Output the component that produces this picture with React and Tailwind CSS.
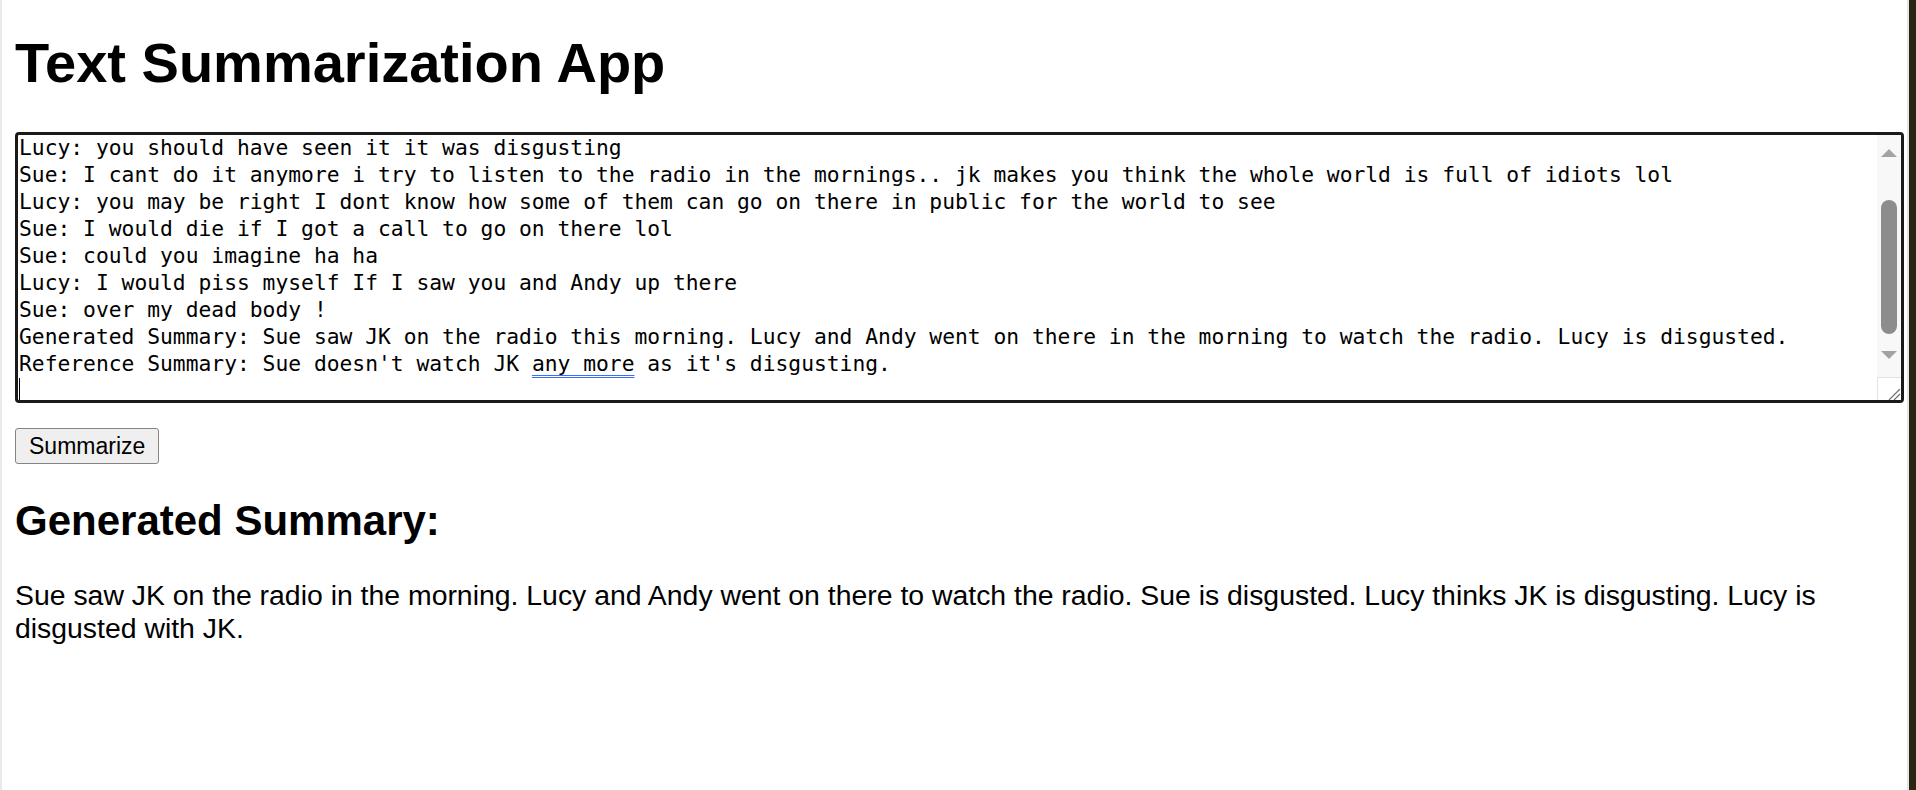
const lines = [
  "Lucy: you should have seen it it was disgusting",
  "Sue: I cant do it anymore i try to listen to the radio in the mornings.. jk makes you think the whole world is full of idiots lol",
  "Lucy: you may be right I dont know how some of them can go on there in public for the world to see",
  "Sue: I would die if I got a call to go on there lol",
  "Sue: could you imagine ha ha",
  "Lucy: I would piss myself If I saw you and Andy up there",
  "Sue: over my dead body !",
  "Generated Summary: Sue saw JK on the radio this morning. Lucy and Andy went on there in the morning to watch the radio. Lucy is disgusted.",
];

function Scrollbar() {
  return (
    <div className="flex w-[24px] shrink-0 flex-col">
      <div className="flex flex-1 flex-col items-center bg-[#f8f8f8] pt-[14px]">
        <svg width="16" height="8" viewBox="0 0 16 8">
          <path d="M0 8 L8 0 L16 8 Z" fill="#a3a3a3" />
        </svg>
        <div className="mt-[43px] h-[134px] w-[16px] rounded-full bg-[#8d8d8d]" />
        <svg className="mt-[17px]" width="16" height="8" viewBox="0 0 16 8">
          <path d="M0 0 L16 0 L8 8 Z" fill="#a3a3a3" />
        </svg>
      </div>
      <div className="h-[23px] border-l border-t border-[#e2e2e2] bg-white">
        <svg width="23" height="22" viewBox="0 0 23 22">
          <path d="M11 22 L22 11 M16 22 L22 16" stroke="#6f6f6f" strokeWidth="1.2" />
        </svg>
      </div>
    </div>
  );
}

export default function App() {
  return (
    <div className="flex h-screen overflow-hidden bg-white font-['Liberation_Sans',Arial,sans-serif] text-black">
      <div className="w-[2px] shrink-0 bg-[#e9e9e9]" />
      <main className="min-w-0 flex-1 pl-[13px] pr-[3px]">
        <h1 className="mt-[31px] text-[56px] font-bold leading-[64px]">Text Summarization App</h1>

        <div className="mt-[37px] flex h-[271px] overflow-hidden rounded-[4px] border-[3px] border-[#1a1a1a]">
          <div className="min-w-0 flex-1 overflow-hidden whitespace-pre pl-[1px] font-['DejaVu_Sans_Mono',monospace] text-[21.3px] leading-[27px]">
            <div className="-mt-[1px]">
              {lines.map((l, i) => (
                <div key={i}>{l}</div>
              ))}
              <div>
                Reference Summary: Sue doesn't watch JK{" "}
                <span className="underline decoration-[#3d6ef5] decoration-double decoration-1 underline-offset-[4px]">
                  any more
                </span>{" "}
                as it's disgusting.
              </div>
              <div className="h-[27px] pt-[1px]">
                <div className="h-[24px] w-px bg-black" />
              </div>
            </div>
          </div>
          <Scrollbar />
        </div>

        <button className="mt-[25px] rounded-[3px] border border-[#858585] bg-[#efefef] px-[13px] py-[4px] text-[23px] leading-[26px]">
          Summarize
        </button>

        <h2 className="mt-[33px] text-[42px] font-bold leading-[48px]">Generated Summary:</h2>
        <p className="mt-[34px] text-[28.4px] leading-[33px]">
          Sue saw JK on the radio in the morning. Lucy and Andy went on there to watch the radio. Sue is disgusted. Lucy thinks JK is disgusting. Lucy is disgusted with JK.
        </p>
      </main>
      <div className="w-[2px] shrink-0 bg-[#e6e6e6]" />
      <div className="w-[7px] shrink-0 bg-[#2a2612]" />
    </div>
  );
}
